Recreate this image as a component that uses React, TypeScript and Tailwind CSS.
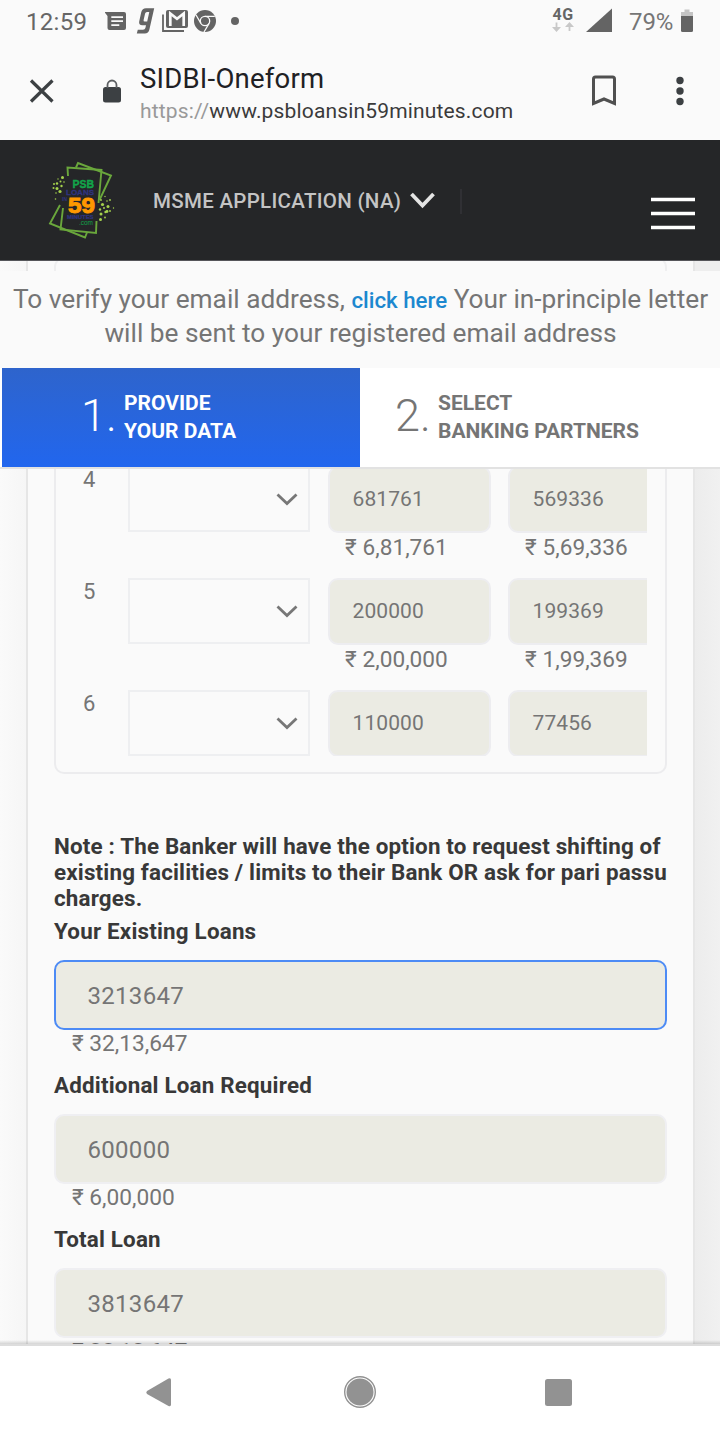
import React from "react";

function StatusBar() {
  return (
    <div className="flex h-11 shrink-0 items-center pl-[26px] text-[#666666]">
      <span className="w-[79px] text-[24px] leading-[44px] tracking-[0.3px]">12:59</span>
      <svg width="136" height="44" viewBox="105 0 136 44" fill="#646464">
        <path d="M104.500 12h19.500q2 0 2 2v14q0 2-2 2h-14.500q-2 0-2-2V16z" />
        <path d="M111.300 17.200h11.700M111.300 21.200h11.700M111.300 25.200h8" stroke="#fafafa" strokeWidth="1.700" />
        <path
          d="M154.200 8.200L149.400 29.500Q148.500 33.500 144.800 33.500H136.800L137.800 29.800H143Q145 29.800 145.400 28L146 25.200H142.300Q138.500 25.200 139.200 21.500L141.300 12Q142.200 8.200 146 8.200ZM149.300 12H147Q145.500 12 145.100 13.600L143.600 20Q143.300 21.500 144.700 21.500H147.200Z"
          fillRule="evenodd"
        />
        <path d="M163 14.500v16.500h21" fill="none" stroke="#646464" strokeWidth="1.800" />
        <rect x="166" y="10" width="22" height="18" rx="2" />
        <path d="M170.300 26V13.500L177 18.800L183.700 13.500V26" fill="none" stroke="#fafafa" strokeWidth="2.700" />
        <circle cx="205" cy="21" r="11" />
        <circle cx="205" cy="21" r="4.700" fill="none" stroke="#fafafa" strokeWidth="1.300" />
        <path d="M205 16.300H214.800M200.900 23.400L196 15M209.100 23.400L204 32" stroke="#fafafa" strokeWidth="1.300" />
        <circle cx="235" cy="21" r="4" />
      </svg>
      <svg className="ml-[309px]" width="64" height="44" viewBox="550 0 64 44">
        <text x="552.500" y="20.200" fontFamily="Roboto" fontWeight="700" fontSize="16" letterSpacing="0.500" fill="#666">4G</text>
        <path d="M556.500 22.500V29M569.500 31V25" stroke="#c8c8c8" strokeWidth="1.800" />
        <path d="M552 27h9l-4.500 5zM565 27h9l-4.500-5z" fill="#c8c8c8" />
        <path d="M586 32H612V8.500z" fill="#646464" />
      </svg>
      <span className="ml-[15px] w-[52px] text-[24px] leading-[44px] tracking-[-0.1px] text-[#757575]">79%</span>
      <svg width="13" height="44" viewBox="681 0 13 44">
        <path d="M684.500 9.500h5v2.500h3.500v4.500h-12v-4.500h3.500z" fill="#c4c4c4" />
        <path d="M681 16h12v14.500q0 1.500-1.500 1.500h-9q-1.500 0-1.500-1.500z" fill="#646464" />
      </svg>
    </div>
  );
}

function BrowserBar() {
  return (
    <div className="flex h-24 shrink-0 items-center">
      <svg width="140" height="96" viewBox="0 44 140 96">
        <path d="M31 80.500L52.500 101.500M52.500 80.500L31 101.500" stroke="#3c4043" strokeWidth="3.200" />
        <rect x="103" y="87" width="18" height="15.500" rx="2.500" fill="#3c4043" />
        <path d="M107.500 88v-3a4.500 4.500 0 0 1 9 0v3" fill="none" stroke="#5c5f62" strokeWidth="1.800" />
      </svg>
      <div className="flex w-[420px] flex-col whitespace-nowrap pt-[4px]">
        <span className="text-[27.500px] leading-[34px] tracking-[0.220px] text-[#202124]">SIDBI-Oneform</span>
        <span className="text-[21px] leading-[31px] tracking-[0.16px] text-[#3a3a3a]">
          <span className="text-[#999999]">https://</span>www.psbloansin59minutes.com
        </span>
      </div>
      <svg width="160" height="96" viewBox="560 44 160 96">
        <path d="M593.500 103.500V79Q593.500 77 595.500 77H612.500Q614.500 77 614.500 79V103.500L604 99z" fill="none" stroke="#505050" strokeWidth="3" />
        <g fill="#3c4043">
          <circle cx="680" cy="80.500" r="3.700" />
          <circle cx="680" cy="91" r="3.700" />
          <circle cx="680" cy="101.500" r="3.700" />
        </g>
      </svg>
    </div>
  );
}

const dots: [number, number, number][] = [
  [62.500, 177.500, 1.500], [58, 179, 0.700], [60.500, 181.500, 1], [54, 184, 1], [57, 183.500, 1.200], [61.500, 186, 1.200],
  [53.500, 188, 1], [57, 188.500, 1.500], [60, 191.500, 1.600], [56, 193, 0.800], [55.500, 199, 0.800], [64, 182, 0.800],
  [105, 196.500, 0.700], [101, 200, 0.900], [107, 201, 0.800], [110, 200, 0.900], [102.500, 204.500, 1.600], [108, 206.500, 1.500],
  [104, 208, 1], [100, 209.500, 1.200], [113.500, 208, 0.700], [107, 211.500, 1.400], [101, 214, 1.500], [105.500, 212, 1.200],
  [110, 211, 0.900], [100.500, 219.500, 1.500], [105, 217.500, 0.900],
];

function Logo() {
  return (
    <svg width="153" height="120" viewBox="0 140 153 120">
      <g fill="none" stroke="#6aa73c" strokeWidth="1.900">
        <path d="M68 176L67.500 167.500L101.500 170L98.500 203M96.500 221L96 233L60.500 229.500L63 208" />
        <path d="M76 167.500L78 163L111 175.500L99.500 200M60 205L50 223.500L85 237.500L87 232.500" />
      </g>
      {dots.map(([x, y, r], i) => (
        <circle key={i} cx={x} cy={y} r={r} fill="#a5d24d" />
      ))}
      <g fontFamily="Liberation Sans, sans-serif" fontWeight="700">
        <text x="72.500" y="188" fontSize="10.500" textLength="21.500" lengthAdjust="spacingAndGlyphs" fill="#12a54a" stroke="#12a54a" strokeWidth="0.400">PSB</text>
        <text x="66" y="195" fontSize="8" textLength="28" lengthAdjust="spacingAndGlyphs" fill="#2f3480" stroke="#2f3480" strokeWidth="0.300">LOANS</text>
        <text x="62" y="201" fontSize="5" fill="#2f3480">IN</text>
        <text x="68" y="213.300" fontSize="22" textLength="27" lengthAdjust="spacingAndGlyphs" fill="#ff9800" stroke="#ff9800" strokeWidth="0.900">59</text>
        <text x="67" y="219" fontSize="5.500" textLength="26.500" lengthAdjust="spacingAndGlyphs" fill="#2f3480" stroke="#2f3480" strokeWidth="0.200">MINUTES</text>
        <text x="79" y="225" fontSize="6.500" fontWeight="400" textLength="14" lengthAdjust="spacingAndGlyphs" fill="#12a54a">.com</text>
      </g>
    </svg>
  );
}

function SiteHeader() {
  return (
    <div className="flex h-[121px] shrink-0 items-center border-b border-[#55565a] bg-[#252628]">
      <Logo />
      <span className="w-[257px] whitespace-nowrap pt-0.5 text-[20.500px] font-medium leading-6 tracking-[0.300px] text-[#c4c4c4]">MSME APPLICATION (NA)</span>
      <svg width="310" height="120" viewBox="410 140 310 120">
        <path d="M411.500 194L422.500 205.500L433.500 194" fill="none" stroke="#e4e4e4" strokeWidth="3.800" />
        <path d="M461 189v25" stroke="#343538" strokeWidth="1.500" />
        <path d="M651 199.500h44M651 213.500h44M651 227.500h44" stroke="#fff" strokeWidth="3.600" />
      </svg>
    </div>
  );
}

function UnderlayStrip() {
  return (
    <div className="flex h-[10px] shrink-0 overflow-hidden">
      <div className="w-[26px] bg-gradient-to-r from-[#fafafa] to-[#f6f6f6]" />
      <div className="h-[10px] w-[669px] border-x-2 border-[#e6e6e6] px-[26px]">
        <div className="-mt-1 h-10 rounded-[10px] border-2 border-[#efeff0]" />
      </div>
      <div className="w-[25px] bg-[#eeeeee]" />
    </div>
  );
}

function Steps() {
  return (
    <div className="flex h-[101px] shrink-0 border-b-2 border-[#e2e2e2] bg-white pl-0.5 pr-px">
      <div className="flex w-[358px] bg-gradient-to-b from-[#2e64cc] to-[#2166ee] pl-[79px] text-white">
        <span className="w-[43px] pt-[21px] text-[45px] font-light leading-[54px]">1.</span>
        <span className="whitespace-nowrap pt-[21px] text-[21px] font-bold leading-7">PROVIDE<br />YOUR DATA</span>
      </div>
      <div className="flex flex-1 pl-[35px] text-[#757575]">
        <span className="w-[43px] pt-[21px] text-[45px] font-light leading-[54px]">2.</span>
        <span className="whitespace-nowrap pt-[21px] text-[21px] font-bold leading-7">SELECT<br />BANKING PARTNERS</span>
      </div>
    </div>
  );
}

function AmountCell({ value, words }: { value: string; words: string }) {
  return (
    <div className="w-[163px] shrink-0 pt-px">
      <div className="flex h-[67px] items-center rounded-[10px] border-2 border-[#ededf0] bg-[#ebebe3] pl-[22.500px] pt-px text-[21px] tracking-[0.1px]">{value}</div>
      <div className="whitespace-nowrap pl-[17px] text-[22.600px] leading-[30px] tracking-[0.05px]">{words}</div>
    </div>
  );
}

function LoanRow({ index, sanctioned, sanctionedWords, outstanding, outstandingWords }: {
  index: string; sanctioned: string; sanctionedWords: string; outstanding: string; outstandingWords: string;
}) {
  return (
    <div className="flex h-28 text-[#757575]">
      <div className="w-[72px] shrink-0 pl-[27px] text-[22px] leading-[30px]">{index}</div>
      <div className="mt-px mr-[18px] flex h-[66px] w-[182px] shrink-0 items-center justify-end border-2 border-[#eeeff1] pr-2.5">
        <svg width="22" height="14" viewBox="0 0 22 14">
          <path d="M1.500 2.500L11 11.500L20.500 2.500" fill="none" stroke="#777" strokeWidth="2.800" />
        </svg>
      </div>
      <AmountCell value={sanctioned} words={sanctionedWords} />
      <div className="w-[17px] shrink-0" />
      <AmountCell value={outstanding} words={outstandingWords} />
    </div>
  );
}

function Field({ label, value, words, focused }: { label: string; value: string; words: string; focused?: boolean }) {
  return (
    <div className="h-[154px]">
      <div className="text-[22.400px] font-bold leading-[38px] tracking-[0.190px] text-[#383838]">{label}</div>
      <div className={`mt-2.5 flex h-[70px] items-center rounded-[10px] border-2 bg-[#ebebe3] pl-[31.500px] pt-0.5 text-[24px] tracking-[0.3px] ${focused ? "border-[#4d8bf5]" : "border-[#efeff2]"}`}>{value}</div>
      <div className="pl-[18px] text-[22.700px] leading-[27px]">{words}</div>
    </div>
  );
}

function FormArea() {
  return (
    <div className="flex h-[875px] shrink-0 overflow-hidden">
      <div className="w-[26px] bg-gradient-to-r from-[#fafafa] to-[#f6f6f6]" />
      <div className="w-[669px] shrink-0 border-x-2 border-[#e6e6e6] px-[26px] text-[#757575]">
        <div className="h-[305px] rounded-b-[10px] border-x-2 border-b-2 border-[#ececee]">
          <div className="h-[287px] w-[591px] overflow-hidden">
            <div className="-mt-1">
              <LoanRow index="4" sanctioned="681761" sanctionedWords="₹ 6,81,761" outstanding="569336" outstandingWords="₹ 5,69,336" />
              <LoanRow index="5" sanctioned="200000" sanctionedWords="₹ 2,00,000" outstanding="199369" outstandingWords="₹ 1,99,369" />
              <LoanRow index="6" sanctioned="110000" sanctionedWords="" outstanding="77456" outstandingWords="" />
            </div>
          </div>
        </div>
        <p className="mt-[59px] mb-px whitespace-nowrap text-[22.400px] font-bold leading-[26px] tracking-[0.170px] text-[#383838]">
          Note : The Banker will have the option to request shifting of<br />
          existing facilities / limits to their Bank OR ask for pari passu<br />
          charges.
        </p>
        <Field label="Your Existing Loans" value="3213647" words="₹ 32,13,647" focused />
        <Field label="Additional Loan Required" value="600000" words="₹ 6,00,000" />
        <Field label="Total Loan" value="3813647" words="₹ 38,13,647" />
      </div>
      <div className="w-[25px] bg-gradient-to-r from-[#ececec] to-[#f1f1f1]" />
    </div>
  );
}

export default function App() {
  return (
    <div className="flex h-[1440px] w-[720px] flex-col overflow-hidden bg-[#fafafa] font-['Roboto',sans-serif]">
      <StatusBar />
      <BrowserBar />
      <SiteHeader />
      <UnderlayStrip />
      <p className="h-[97px] shrink-0 whitespace-nowrap pl-px pt-3 text-center text-[26.250px] leading-[32.500px] text-[#757575]">
        To verify your email address, <span className="text-[22.300px] font-medium text-[#1c88cf]">click here</span> Your in-principle letter<br />
        will be sent to your registered email address
      </p>
      <Steps />
      <FormArea />
      <div className="z-10 -mt-[4px] h-1 shrink-0 bg-gradient-to-b from-transparent to-black/15" />
      <div className="h-[2px] shrink-0 bg-[#dddddd]" />
      <div className="flex flex-1 bg-white">
        <svg width="720" height="94" viewBox="0 1346 720 94" fill="#929292">
          <path d="M147 1391L168.500 1378.500Q171 1377.500 171 1380V1404.500Q171 1407 168.500 1406L147 1394Q145.500 1392.500 147 1391z" />
          <circle cx="360" cy="1392" r="13.500" />
          <circle cx="360" cy="1392" r="15.300" fill="none" stroke="#929292" strokeWidth="1.400" />
          <rect x="545" y="1379" width="27" height="27" rx="2.500" />
        </svg>
      </div>
    </div>
  );
}
